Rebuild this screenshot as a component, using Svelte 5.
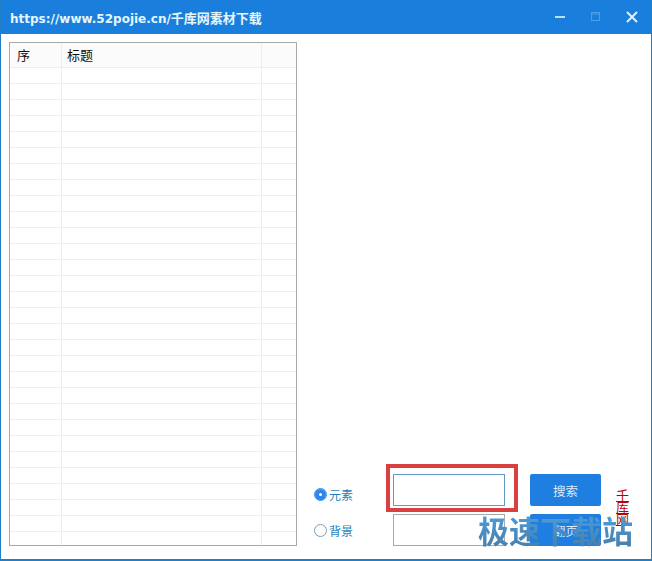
<script>
  const rows = Array.from({ length: 30 }, (_, i) => i);
</script>

<div class="window">
  <header class="titlebar">
    <span class="title"><span class="url">https://www.52pojie.cn/</span>千库网素材下载</span>
    <div class="controls">
      <svg class="ctl" width="16" height="16" viewBox="0 0 16 16" aria-hidden="true">
        <path d="M3 8h10" stroke="#b9e0fb" stroke-width="2" />
      </svg>
      <svg class="ctl dim" width="16" height="16" viewBox="0 0 16 16" aria-hidden="true">
        <rect x="3.5" y="3.5" width="8" height="8" fill="none" stroke="#4f9fe8" />
        <path d="M3.5 5h8" stroke="#4f9fe8" />
      </svg>
      <svg class="ctl" width="16" height="16" viewBox="0 0 16 16" aria-hidden="true">
        <path d="M3 3l10 10M13 3L3 13" stroke="#dff1fd" stroke-width="2" />
      </svg>
    </div>
  </header>

  <main class="content">
    <section class="list">
      <div class="row head">
        <div class="cell">序</div>
        <div class="cell">标题</div>
        <div class="cell"></div>
      </div>
      {#each rows as r (r)}
        <div class="row">
          <div class="cell"></div>
          <div class="cell"></div>
          <div class="cell"></div>
        </div>
      {/each}
    </section>

    <section class="panel">
      <div class="form">
        <label class="radio-line on"><span class="radio"></span>元素</label>
        <input class="box first" type="text" />
        <button class="btn" type="button">搜索</button>
        <label class="radio-line"><span class="radio"></span>背景</label>
        <input class="box" type="text" />
        <button class="btn" type="button">翻页</button>
      </div>
      <a class="link" href="#top">千库网</a>
    </section>
  </main>

  <div class="highlight"></div>
  <div class="watermark">极速下载站</div>
</div>

<style>
  :global(body) {
    margin: 0;
    background: #fff;
  }

  .window {
    position: relative;
    width: 652px;
    height: 561px;
    box-sizing: border-box;
    overflow: hidden;
    display: flex;
    flex-direction: column;
    background: #fff;
    border: 1px solid #1f7fc8;
    border-top: 0;
    border-bottom-width: 2px;
    font-family: "Liberation Sans", "Noto Sans CJK SC", sans-serif;
  }

  .titlebar {
    flex: none;
    height: 34px;
    margin: 0 -1px;
    padding: 0 12px 0 10px;
    display: flex;
    align-items: center;
    justify-content: space-between;
    background: #1a7fdc;
  }

  .title {
    color: #e4f6fb;
    font-size: 13px;
    font-weight: 700;
  }

  .url {
    font-family: "DejaVu Sans", sans-serif;
    font-size: 12px;
  }

  .controls {
    display: flex;
    gap: 20px;
  }

  .content {
    flex: 1;
    min-height: 0;
    display: flex;
    padding: 8px 0 0 8px;
  }

  .list {
    flex: none;
    width: 288px;
    height: 504px;
    box-sizing: border-box;
    overflow: hidden;
    border: 1px solid #a9a9a9;
  }

  .row {
    display: grid;
    grid-template-columns: 52px 200px 1fr;
    height: 16px;
    box-sizing: border-box;
    border-bottom: 1px solid #eeeeee;
  }

  .row.head {
    height: 25px;
    background: #fbfbfb;
    font-size: 13px;
    color: #111;
  }

  .cell {
    border-right: 1px solid #eeeeee;
    padding-left: 7px;
    line-height: 25px;
  }

  .cell:nth-child(2) {
    padding-left: 5px;
  }

  .cell:last-child {
    border-right: 0;
  }

  .panel {
    flex: 1;
    display: flex;
    align-items: flex-end;
    padding-left: 17px;
  }

  .form {
    display: grid;
    grid-template-columns: 79px 112px 96px;
    grid-auto-rows: 32px;
    row-gap: 8px;
    align-items: center;
    margin-bottom: 13px;
  }

  .radio-line {
    display: flex;
    align-items: center;
    gap: 2px;
    font-size: 12px;
    color: #2a7fb8;
  }

  .radio-line.on {
    margin-top: 8px;
  }

  .radio {
    width: 11px;
    height: 11px;
    border: 1px solid #7a9cb5;
    border-radius: 50%;
    background: #fff;
  }

  .on .radio {
    border-color: #2f86e6;
    box-shadow: inset 0 0 0 4px #2f86e6;
  }

  .box {
    width: 112px;
    height: 32px;
    box-sizing: border-box;
    padding: 0;
    border: 1px solid #a9a9a9;
    background: #fff;
    outline: none;
  }

  .box.first {
    border-color: #5f9cc0;
  }

  .btn {
    width: 71px;
    height: 32px;
    margin-left: 25px;
    border: 0;
    border-radius: 2px;
    background: #1f7fe0;
    color: #dcecfb;
    font: inherit;
    font-size: 12.5px;
  }

  .link {
    width: 13px;
    margin: 0 0 33px 15px;
    color: #c00000;
    font-size: 13px;
    line-height: 12px;
    word-break: break-all;
    text-decoration: underline;
  }

  .highlight {
    position: absolute;
    left: 385px;
    top: 464px;
    width: 132px;
    height: 48px;
    box-sizing: border-box;
    border: 4px solid #d9403f;
  }

  .watermark {
    position: absolute;
    left: 477px;
    top: 512px;
    font-family: "Noto Sans CJK SC", sans-serif;
    font-size: 31px;
    font-weight: 700;
    line-height: 36px;
    white-space: nowrap;
    color: transparent;
    background: linear-gradient(#4a9fe0, #4a7ea8);
    background-clip: text;
    -webkit-background-clip: text;
  }
</style>
